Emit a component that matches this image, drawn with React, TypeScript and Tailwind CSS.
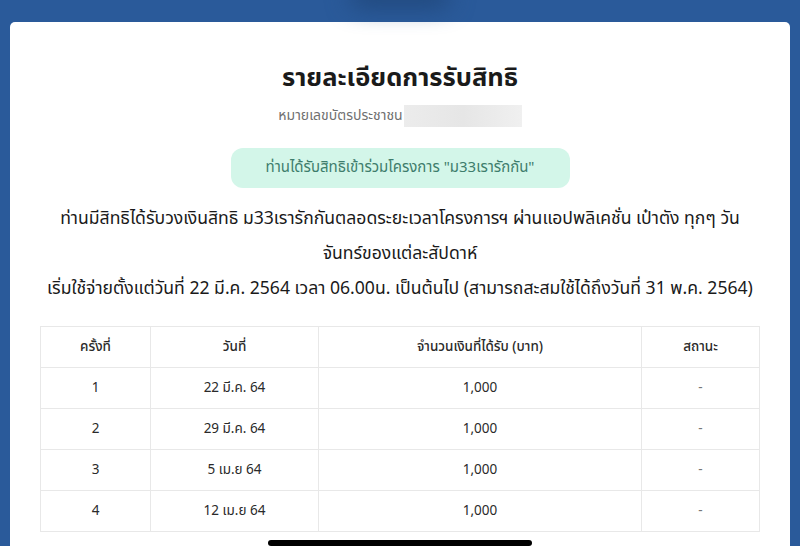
const rows = [
  { no: "1", date: "22 มี.ค. 64", amount: "1,000", status: "-" },
  { no: "2", date: "29 มี.ค. 64", amount: "1,000", status: "-" },
  { no: "3", date: "5 เม.ย 64", amount: "1,000", status: "-" },
  { no: "4", date: "12 เม.ย 64", amount: "1,000", status: "-" },
];

export default function App() {
  return (
    <div
      className="relative w-[800px] h-[546px] overflow-hidden bg-[#2a5a9a] pt-[22px] px-[10px]"
      style={{ fontFamily: '"Noto Sans Thai", "Noto Sans", "Liberation Sans", sans-serif' }}
    >
      {/* notch shadow */}
      <div className="absolute left-[350px] top-[-14px] w-[100px] h-[20px] rounded-full bg-[#1f4577] blur-md" />

      <div className="h-full rounded-t-[5px] bg-white text-center pt-[40px]">
        <h1 className="text-[25.5px] leading-[32px] font-bold text-[#1a1a1a]">รายละเอียดการรับสิทธิ</h1>

        <div className="mt-[11px] flex items-center justify-center gap-[1px]">
          <span className="text-[14px] leading-[22px] text-[#707070]">หมายเลขบัตรประชาชน</span>
          <span className="w-[118px] h-[22px] bg-gradient-to-r from-[#ececec] via-[#e6e6e6] to-[#f0f0f0]" />
        </div>

        <div className="mx-auto mt-[21px] w-[339px] h-[40px] rounded-[12px] bg-[#d3f6e9] flex items-center justify-center">
          <span className="text-[15px] text-[#3e7d6c]">ท่านได้รับสิทธิเข้าร่วมโครงการ "ม33เรารักกัน"</span>
        </div>

        <div className="mt-[13px] text-[17.6px] leading-[35px] text-[#1a1a1a] whitespace-nowrap">
          <p>ท่านมีสิทธิได้รับวงเงินสิทธิ ม33เรารักกันตลอดระยะเวลาโครงการฯ ผ่านแอปพลิเคชั่น เป๋าตัง ทุกๆ วัน</p>
          <p>จันทร์ของแต่ละสัปดาห์</p>
          <p>เริ่มใช้จ่ายตั้งแต่วันที่ 22 มี.ค. 2564 เวลา 06.00น. เป็นต้นไป (สามารถสะสมใช้ได้ถึงวันที่ 31 พ.ค. 2564)</p>
        </div>

        <table className="mx-auto mt-[20px] w-[720px] border-collapse border border-[#e8e8e8] text-[13.5px] text-[#2a2a2a]">
          <thead>
            <tr className="h-[41px]">
              <th className="w-[110px] border border-[#e8e8e8] font-medium">ครั้งที่</th>
              <th className="w-[168px] border border-[#e8e8e8] font-medium">วันที่</th>
              <th className="w-[323px] border border-[#e8e8e8] font-medium">จำนวนเงินที่ได้รับ (บาท)</th>
              <th className="border border-[#e8e8e8] font-medium">สถานะ</th>
            </tr>
          </thead>
          <tbody>
            {rows.map((r) => (
              <tr key={r.no} className="h-[41px] text-center">
                <td className="border border-[#e8e8e8]">{r.no}</td>
                <td className="border border-[#e8e8e8]">{r.date}</td>
                <td className="border border-[#e8e8e8]">{r.amount}</td>
                <td className="border border-[#e8e8e8] text-[#777]">{r.status}</td>
              </tr>
            ))}
          </tbody>
        </table>
      </div>

      {/* home indicator */}
      <div className="absolute left-[268px] bottom-[0px] w-[264px] h-[6px] rounded-full bg-black" />
    </div>
  );
}
